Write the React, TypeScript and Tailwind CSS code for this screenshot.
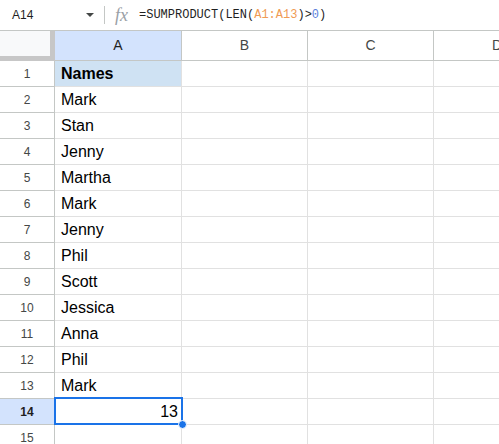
import React from "react";

const names = ["Names", "Mark", "Stan", "Jenny", "Martha", "Mark", "Jenny", "Phil", "Scott", "Jessica", "Anna", "Phil", "Mark", "13", ""];

export default function App() {
  const rows = names.map((n, i) => ({ num: i + 1, val: n }));
  return (
    <div className="w-[499px] h-[444px] overflow-hidden bg-white relative" style={{ fontFamily: '"Liberation Sans", Arial, sans-serif' }}>
      {/* formula bar */}
      <div className="h-[31px] flex items-center border-b border-[#c4c7c5] bg-white">
        <div className="w-[100px] flex items-center pl-[12px] pr-[5px] text-[12px] text-[#1f1f1f]">
          <span className="flex-1">A14</span>
          <svg width="10" height="6" viewBox="0 0 10 6">
            <path d="M1 1 L5 5 L9 1 Z" fill="#444746" />
          </svg>
        </div>
        <div className="w-px h-[18px] bg-[#c4c7c5] ml-[4px]" />
        <span className="ml-[10px] text-[18px] italic text-[#9aa0a6] leading-none" style={{ fontFamily: '"Liberation Serif", serif' }}>fx</span>
        <div className="ml-[11px] text-[12px] text-[#1f1f1f] whitespace-nowrap" style={{ fontFamily: '"Liberation Mono", monospace' }}>
          =SUMPRODUCT(LEN(<span className="text-[#f09b54]">A1:A13</span>)&gt;<span className="text-[#5c7fdc]">0</span>)
        </div>
      </div>
      {/* grid */}
      <div className="grid grid-cols-[55px_127px_126px_126px_126px]">
        <div className="h-[30px] bg-[#c7c7c7] flex">
          <div className="w-[50px] h-[25px] bg-[#f8f9fa]" />
        </div>
        <div className="h-[30px] flex items-center justify-center bg-[#d3e3fd] border-r border-b border-[#c4c7c5] text-[14px] text-[#1f1f1f]">A</div>
        <div className="h-[30px] flex items-center justify-center bg-white border-r border-b border-[#c4c7c5] text-[14px] text-[#444746]">B</div>
        <div className="h-[30px] flex items-center justify-center bg-white border-r border-b border-[#c4c7c5] text-[14px] text-[#444746]">C</div>
        <div className="h-[30px] flex items-center justify-center bg-white border-b border-[#c4c7c5] text-[14px] text-[#444746]">D</div>
        {rows.map((r) => {
          const sel = r.num === 14;
          return (
            <React.Fragment key={r.num}>
              <div className={`h-[26px] flex items-center justify-center border-r border-b border-[#c4c7c5] text-[12px] ${sel ? "bg-[#d3e3fd] text-[#1f1f1f] font-bold" : "bg-white text-[#444746]"}`}>
                {r.num}
              </div>
              <div className={`h-[26px] relative flex items-center border-r border-b border-[#e1e1e1] text-[16px] text-black leading-[18px] ${r.num === 1 ? "bg-[#cfe2f3] font-bold" : "bg-white"} ${sel ? "justify-end pr-[3px]" : "pl-[6px]"}`}>
                {r.val}
                {sel && (
                  <>
                    <div className="absolute left-[-1px] top-[-2px] right-[-2px] bottom-[-1px] border-2 border-[#1a73e8]" />
                    <div className="absolute right-[-6px] bottom-[-5px] w-[9px] h-[9px] rounded-full bg-[#1a73e8] border border-white z-10" />
                  </>
                )}
              </div>
              <div className="h-[26px] border-r border-b border-[#e1e1e1]" />
              <div className="h-[26px] border-r border-b border-[#e1e1e1]" />
              <div className="h-[26px] border-b border-[#e1e1e1]" />
            </React.Fragment>
          );
        })}
      </div>
    </div>
  );
}
